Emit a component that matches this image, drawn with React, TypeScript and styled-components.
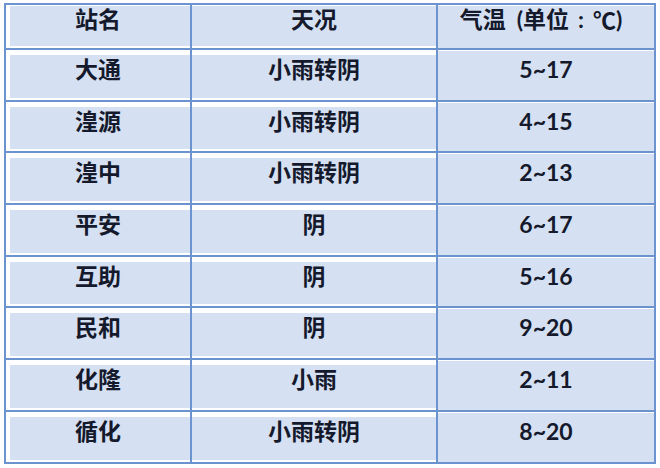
import styled, { createGlobalStyle } from "styled-components";

const rows: [string, string, string][] = [
  ["大通", "小雨转阴", "5~17"],
  ["湟源", "小雨转阴", "4~15"],
  ["湟中", "小雨转阴", "2~13"],
  ["平安", "阴", "6~17"],
  ["互助", "阴", "5~16"],
  ["民和", "阴", "9~20"],
  ["化隆", "小雨", "2~11"],
  ["循化", "小雨转阴", "8~20"],
];

const GlobalStyle = createGlobalStyle`
  body {
    margin: 0;
    background: #ffffff;
    font-family: "Lato", "Noto Sans CJK SC", sans-serif;
  }
`;

const LINE = "#6b93cf";
const FILL = "#d6e0f3";

const Table = styled.div`
  box-sizing: border-box;
  margin: 3px 0 0 4px;
  width: 652px;
  border-top: 2px solid ${LINE};
  border-left: 2px solid ${LINE};
`;

const Row = styled.div<{ $head?: boolean }>`
  display: grid;
  grid-template-columns: 186px 246px 218px;
  height: ${(p) => (p.$head ? "45px" : "51.7px")};
`;

// where the blue fill sits inside each cell (Word leaves white gaps)
const insets = {
  0: { left: 4, top: 5, bottom: 2 },
  1: { left: 0, top: 5, bottom: 2 },
  2: { left: 0, top: 1, bottom: 0 },
};

const Cell = styled.div<{ $col: 0 | 1 | 2; $head?: boolean }>`
  box-sizing: border-box;
  border-right: 2px solid ${LINE};
  border-bottom: 2px solid ${LINE};
  display: flex;
  justify-content: center;
  align-items: flex-start;
  padding-top: ${(p) => (p.$head ? "3px" : "8px")};
  font-size: 23px;
  line-height: 23px;
  font-weight: 700;
  color: #141a2c;
  white-space: nowrap;
  background: ${(p) => {
    const i = insets[p.$col];
    const top = p.$head ? 1 : i.top;
    return `linear-gradient(${FILL}, ${FILL}) left ${i.left}px top ${top}px / calc(100% - ${i.left}px) calc(100% - ${top + i.bottom}px) no-repeat`;
  }};
`;

// bracket / colon with the loose spacing of the original header
const Sep = styled.span<{ $l?: number; $r?: number }>`
  display: inline-block;
  margin-left: ${(p) => p.$l ?? 0}px;
  margin-right: ${(p) => p.$r ?? 0}px;
`;

const Degree = styled.span`
  font-family: "Noto Sans CJK SC", sans-serif;
`;

export default function App() {
  return (
    <>
      <GlobalStyle />
      <Table>
        <Row $head>
          <Cell $col={0} $head>站名</Cell>
          <Cell $col={1} $head>天况</Cell>
          <Cell $col={2} $head>
            气温<Sep $l={11}>(</Sep>单位<Sep $l={9} $r={9}>:</Sep>
            <Degree>℃</Degree>
            <Sep $r={10}>)</Sep>
          </Cell>
        </Row>
        {rows.map(([name, sky, temp]) => (
          <Row key={name}>
            <Cell $col={0}>{name}</Cell>
            <Cell $col={1}>{sky}</Cell>
            <Cell $col={2}>{temp}</Cell>
          </Row>
        ))}
      </Table>
    </>
  );
}
